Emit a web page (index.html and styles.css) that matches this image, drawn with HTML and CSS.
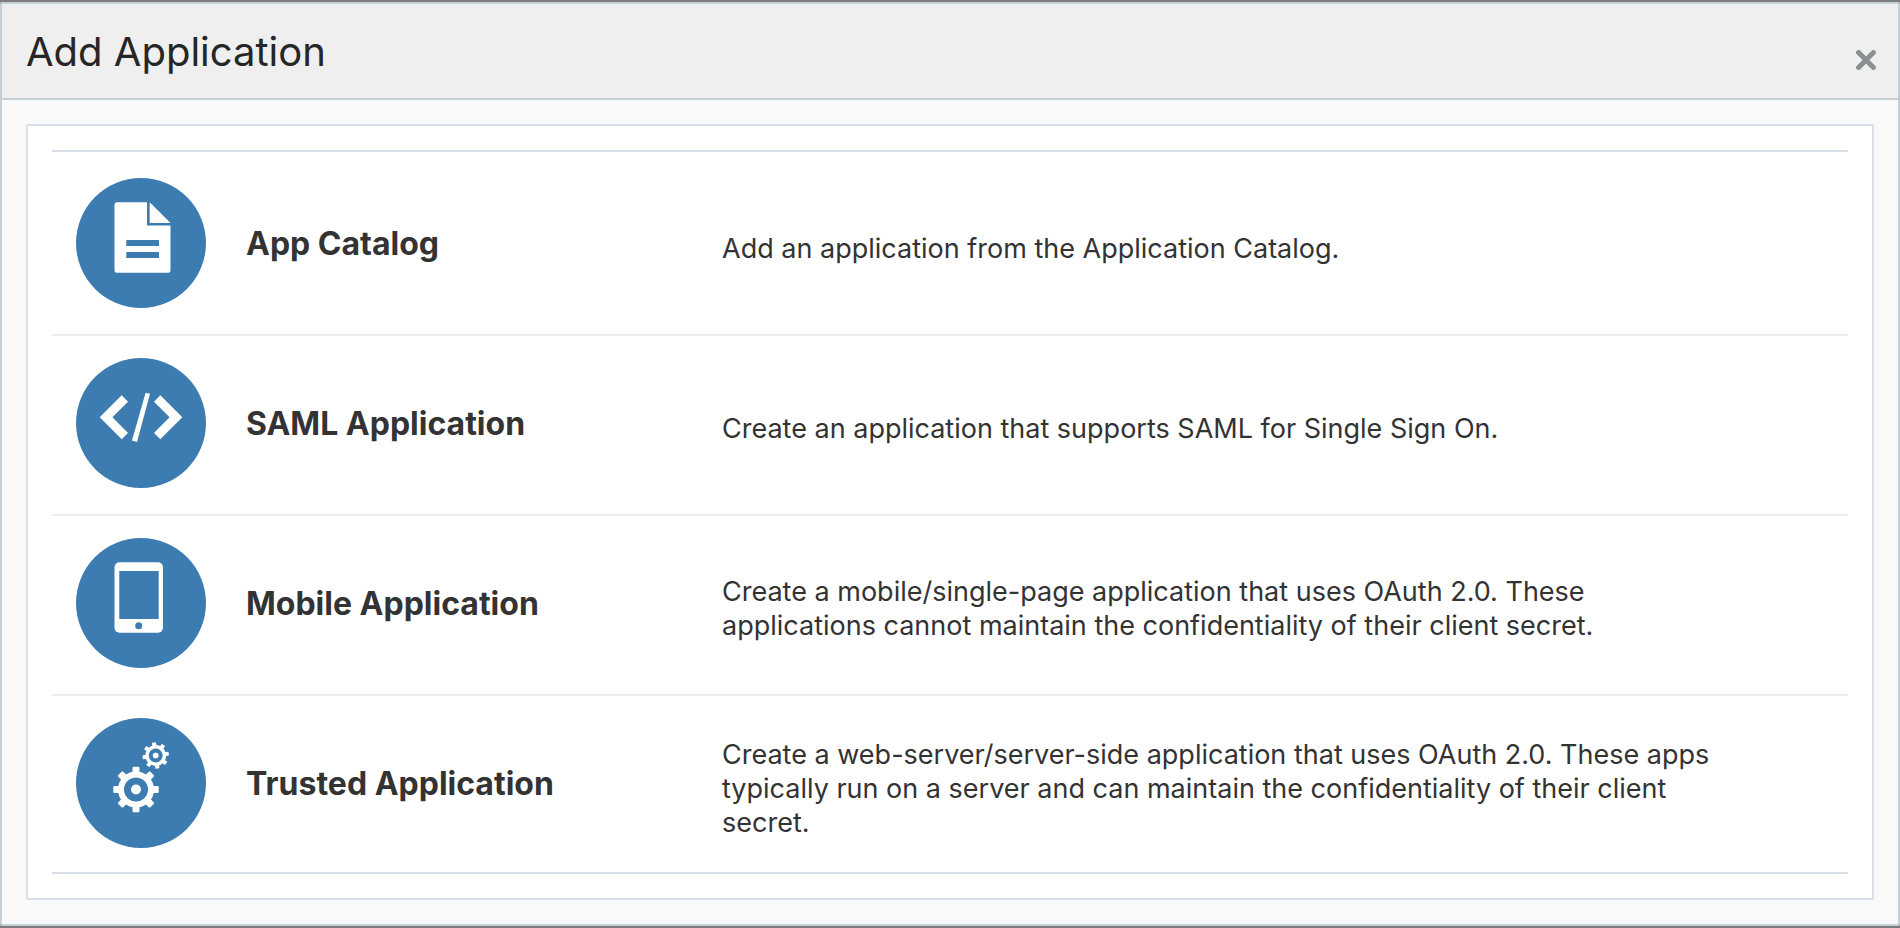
FILE: index.html
```html
<!DOCTYPE html>
<html lang="en">
<head>
<meta charset="utf-8">
<title>Add Application</title>
<link rel="stylesheet" href="styles.css">
</head>
<body>
<main class="dialog" role="dialog" aria-labelledby="dialog-title">
  <header class="dialog-header">
    <h1 class="dialog-title" id="dialog-title">Add Application</h1>
    <button class="dialog-close" type="button" aria-label="Close">
      <svg width="20" height="20" viewBox="0 0 20 20" aria-hidden="true"><path d="M2.6 2.6 17.4 17.4M17.4 2.6 2.6 17.4" stroke="currentColor" stroke-width="5" stroke-linecap="round"/></svg>
    </button>
  </header>
  <div class="dialog-body">
    <div class="panel">
      <ul class="app-list">
        <li class="app-item">
          <a class="app-link" href="#catalog">
            <svg class="app-icon" viewBox="0 0 130 130" aria-hidden="true">
              <circle class="disc" cx="65" cy="65" r="65"/>
              <path class="mark" d="M41 24.300H71V47.500H94.500V92.200a2.500 2.500 0 0 1-2.500 2.500H41a2.500 2.500 0 0 1-2.500-2.500V26.800a2.500 2.500 0 0 1 2.500-2.500Z"/>
              <path class="mark" d="M73.700 24.300 94.500 44.900H73.700Z"/>
              <path class="disc" d="M50.300 62H83v6H50.300ZM50.300 74H83v6H50.300Z"/>
            </svg>
            <span class="app-name">App Catalog</span>
            <span class="app-text">Add an application from the Application Catalog.</span>
          </a>
        </li>
        <li class="app-item">
          <a class="app-link" href="#saml">
            <svg class="app-icon" viewBox="0 0 130 130" aria-hidden="true">
              <circle class="disc" cx="65" cy="65" r="65"/>
              <path class="mark" d="M23.700 59.300 45.700 37.300 52 43.700 36.400 59.300 52 75 45.700 81.300ZM106.300 59.300 84.300 37.300 78 43.700 93.600 59.300 78 75 84.300 81.300ZM69.600 34.700 74 35.800 61 84 56 82.600Z"/>
            </svg>
            <span class="app-name">SAML Application</span>
            <span class="app-text">Create an application that supports SAML for Single Sign On.</span>
          </a>
        </li>
        <li class="app-item">
          <a class="app-link" href="#mobile">
            <svg class="app-icon" viewBox="0 0 130 130" aria-hidden="true">
              <circle class="disc" cx="65" cy="65" r="65"/>
              <rect class="mark" x="38.500" y="24.300" width="48.500" height="70.400" rx="5"/>
              <rect class="disc" x="43.300" y="33" width="39.400" height="48"/>
              <circle class="disc" cx="62.700" cy="87.700" r="3.500"/>
            </svg>
            <span class="app-name">Mobile Application</span>
            <span class="app-text">Create a mobile/single-page application that uses OAuth 2.0. These applications cannot maintain the confidentiality of their client secret.</span>
          </a>
        </li>
        <li class="app-item">
          <a class="app-link" href="#trusted">
            <svg class="app-icon" viewBox="0 0 130 130" aria-hidden="true">
              <defs>
                <g id="gear">
                  <circle r="18"/>
                  <g id="teeth">
                    <rect x="-3.500" y="-22.700" width="7" height="45.400" rx="1.200"/>
                    <rect x="-22.700" y="-3.500" width="45.400" height="7" rx="1.200"/>
                  </g>
                  <use href="#teeth" transform="rotate(45)"/>
                  <circle class="disc" r="12"/>
                  <circle r="5"/>
                </g>
              </defs>
              <circle class="disc" cx="65" cy="65" r="65"/>
              <use class="mark" href="#gear" transform="translate(60 71.500)"/>
              <use class="mark" href="#gear" transform="translate(79.700 37.500) rotate(-8) scale(.58)"/>
            </svg>
            <span class="app-name">Trusted Application</span>
            <span class="app-text">Create a web-server/server-side application that uses OAuth 2.0. These apps typically run on a server and can maintain the confidentiality of their client secret.</span>
          </a>
        </li>
      </ul>
    </div>
  </div>
</main>
</body>
</html>
```
FILE: styles.css
```css
* {
  box-sizing: border-box;
}

body {
  margin: 0;
  padding: 2px 0;
  background: #7e7d7d;
  color: #333;
  font-family: Inter, "Liberation Sans", sans-serif;
}

.dialog {
  border: 2px solid #c4cfd6;
  border-radius: 2px;
  background: #f9f9f9;
}

.dialog-header {
  display: flex;
  align-items: center;
  justify-content: space-between;
  height: 96px;
  padding: 2px 22px 0 24px;
  border-bottom: 2px solid #c4cfd6;
  background: #efefef;
}

.dialog-title {
  margin: 0;
  color: #262626;
  font-size: 40px;
  font-weight: 400;
  line-height: 48px;
}

.dialog-close {
  display: flex;
  margin: 16px 0 0;
  padding: 0;
  border: 0;
  background: none;
  color: #8a9091;
  cursor: pointer;
}

.dialog-body {
  padding: 24px;
}

.panel {
  padding: 24px;
  border: 2px solid #d9dfe8;
  border-radius: 2px;
  background: #fff;
}

.app-list {
  margin: 0;
  padding: 4px 0 0;
  border-top: 2px solid #d9dfe8;
  border-bottom: 2px solid #d9dfe8;
  list-style: none;
}

.app-item + .app-item {
  border-top: 2px solid #ededed;
}

.app-link {
  display: grid;
  grid-template-columns: 130px 436px 1fr;
  column-gap: 40px;
  align-items: center;
  padding: 22px 130px 26px 24px;
  color: inherit;
  text-decoration: none;
}

.app-item:last-child .app-link {
  padding-bottom: 24px;
}

.app-icon {
  display: block;
  width: 130px;
  height: 130px;
}

.disc {
  fill: #3d7cb0;
}

.mark {
  fill: #fff;
}

.app-name {
  padding-top: 2px;
  font-size: 32px;
  font-weight: 700;
  line-height: 40px;
}

.app-text {
  padding-top: 12px;
  font-size: 27px;
  line-height: 34px;
}
```
